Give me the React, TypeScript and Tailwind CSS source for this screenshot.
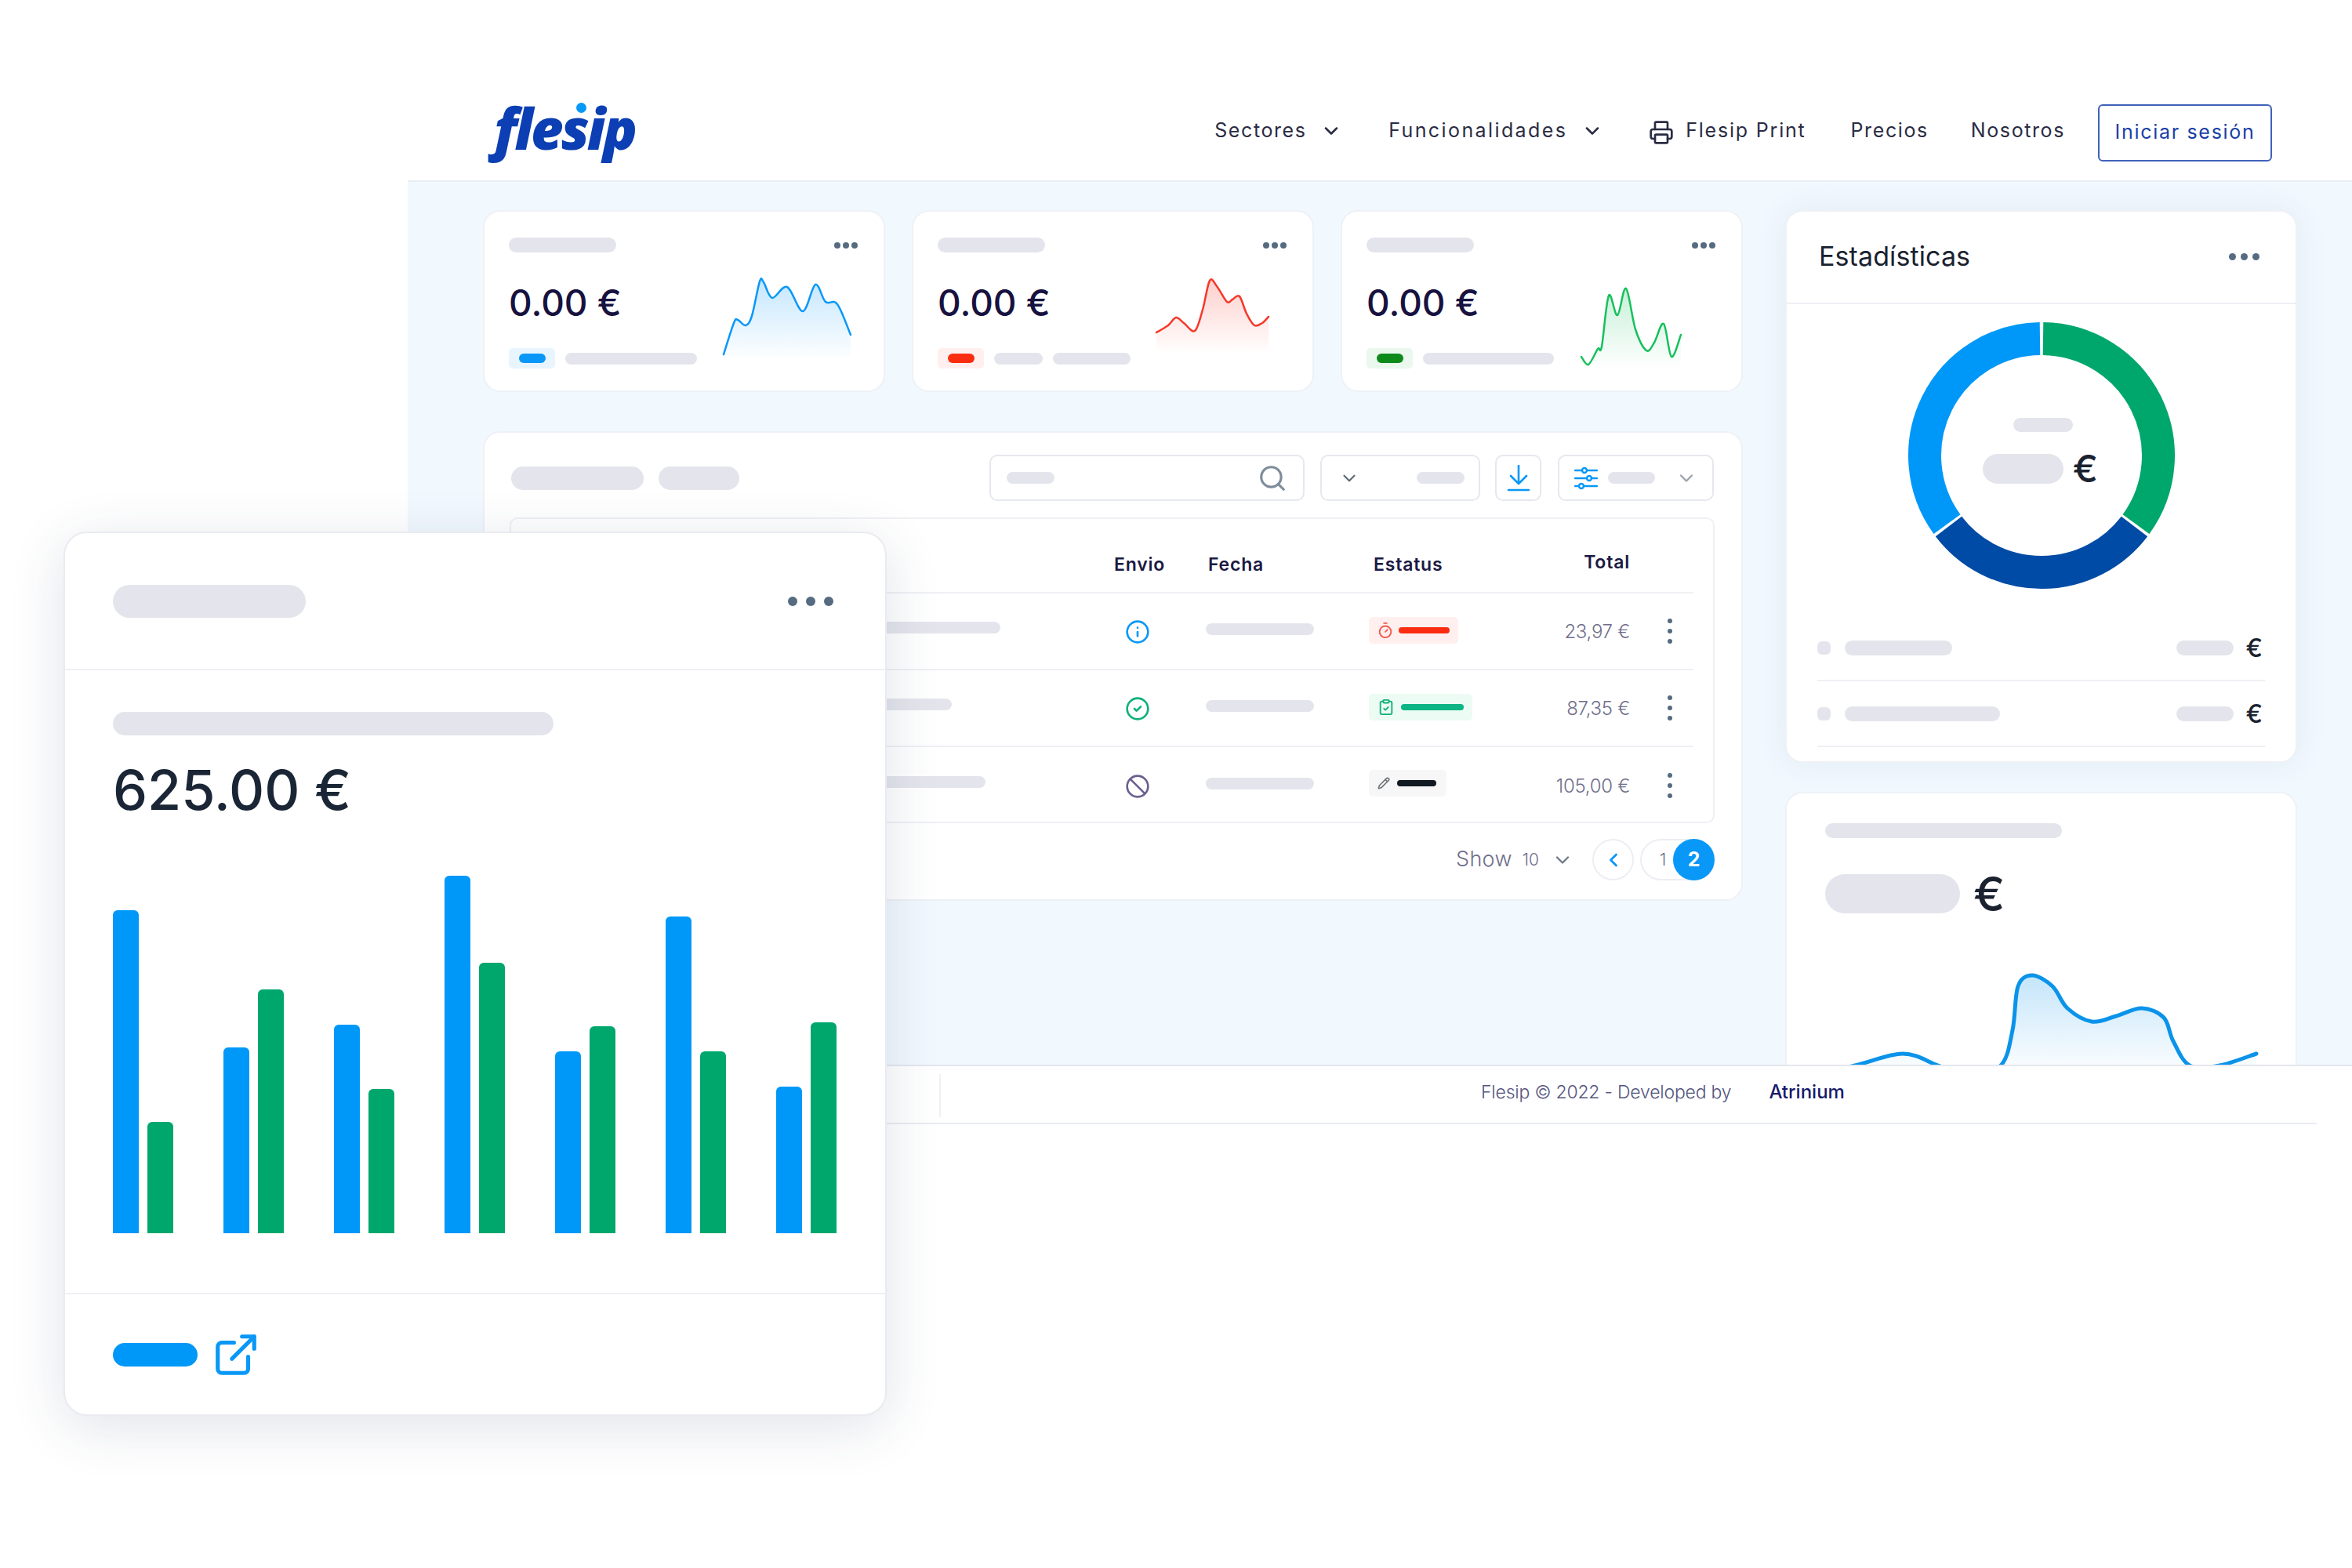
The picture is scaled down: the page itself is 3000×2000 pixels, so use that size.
import { useId } from 'react';
import {
  Ban,
  ChevronDown,
  ChevronLeft,
  CircleCheck,
  ClipboardCheck,
  ExternalLink,
  Info,
  Pencil,
  Printer,
  Search,
  Timer,
} from 'lucide-react';

type Pt = [number, number];

// Skeleton placeholder
function Bar({ className = '' }: { className?: string }) {
  return <div className={`rounded-full bg-[#e4e5ec] ${className}`} />;
}

function Dots({ big = false, mid = false }: { big?: boolean; mid?: boolean }) {
  const dot = big ? 'w-[12px] h-[12px]' : mid ? 'w-[9px] h-[9px]' : 'w-[8px] h-[8px]';
  return (
    <div className={`flex ${big ? 'gap-[11px]' : mid ? 'gap-[6px]' : 'gap-[3px]'}`}>
      <span className={`rounded-full bg-[#566b80] ${dot}`} />
      <span className={`rounded-full bg-[#566b80] ${dot}`} />
      <span className={`rounded-full bg-[#566b80] ${dot}`} />
    </div>
  );
}

function Kebab() {
  return (
    <div className="flex flex-col gap-[7px]">
      <span className="w-[6px] h-[6px] rounded-full bg-[#566b80]" />
      <span className="w-[6px] h-[6px] rounded-full bg-[#566b80]" />
      <span className="w-[6px] h-[6px] rounded-full bg-[#566b80]" />
    </div>
  );
}

// Catmull-Rom to bezier, the charts are smooth curves through read-off points
function smooth(pts: Pt[]) {
  let d = `M${pts[0][0]} ${pts[0][1]}`;
  for (let i = 0; i < pts.length - 1; i++) {
    const p0 = pts[i - 1] ?? pts[i];
    const p1 = pts[i];
    const p2 = pts[i + 1];
    const p3 = pts[i + 2] ?? p2;
    const c1x = p1[0] + (p2[0] - p0[0]) / 6;
    const c1y = p1[1] + (p2[1] - p0[1]) / 6;
    const c2x = p2[0] - (p3[0] - p1[0]) / 6;
    const c2y = p2[1] - (p3[1] - p1[1]) / 6;
    d += ` C${c1x} ${c1y} ${c2x} ${c2y} ${p2[0]} ${p2[1]}`;
  }
  return d;
}

function Spark({
  pts,
  color,
  box,
  width,
  height,
  bottom,
  strokeWidth = 2.5,
}: {
  pts: Pt[];
  color: string;
  box: string;
  width: number;
  height: number;
  bottom: number;
  strokeWidth?: number;
}) {
  const id = useId();
  const line = smooth(pts);
  const first = pts[0];
  const last = pts[pts.length - 1];
  return (
    <svg width={width} height={height} viewBox={box} fill="none">
      <defs>
        <linearGradient id={id} x1="0" y1="0" x2="0" y2="1">
          <stop offset="0" stopColor={color} stopOpacity="0.24" />
          <stop offset="1" stopColor={color} stopOpacity="0" />
        </linearGradient>
      </defs>
      <path d={`${line} L${last[0]} ${bottom} L${first[0]} ${bottom} Z`} fill={`url(#${id})`} />
      <path d={line} stroke={color} strokeWidth={strokeWidth} strokeLinecap="round" strokeLinejoin="round" />
    </svg>
  );
}

function KpiCard({
  badgeBg,
  badgeFg,
  children,
  spark,
  sparkPos,
}: {
  badgeBg: string;
  badgeFg: string;
  children: React.ReactNode;
  spark: React.ReactNode;
  sparkPos: string;
}) {
  return (
    <div className="relative h-[232px] rounded-[22px] border-2 border-[#eef1f6] bg-white pl-[31px] pr-[33px] pt-[33px]">
      <div className="flex items-center justify-between h-[19px]">
        <Bar className="h-[19px] w-[137px]" />
        <Dots />
      </div>
      <div className="mt-[44px] text-[46px] leading-[40px] font-medium text-[#17123f]">0.00 €</div>
      <div className="mt-[38px] flex items-center gap-[13px]">
        <div className={`w-[59px] h-[26px] rounded-[5px] flex items-center justify-center ${badgeBg}`}>
          <span className={`w-[34px] h-[12px] rounded-full ${badgeFg}`} />
        </div>
        {children}
      </div>
      <div className={`absolute ${sparkPos}`}>{spark}</div>
    </div>
  );
}

function Row({
  barW,
  icon,
  status,
  amount,
}: {
  barW: string;
  icon: React.ReactNode;
  status: React.ReactNode;
  amount: string;
}) {
  return (
    <div className="flex items-center h-[98px] border-b-2 border-[#eff0f4] mr-[25px]">
      <div className="w-[769px] pl-[248px]">
        <Bar className={`h-[15px] -translate-y-[5px] ${barW}`} />
      </div>
      <div className="w-[117px] pl-[14px] translate-y-[1px]">{icon}</div>
      <div className="w-[208px]">
        <Bar className="w-[138px] h-[15px] -translate-y-[3px]" />
      </div>
      <div className="w-[210px] -translate-y-[1px]">{status}</div>
      <div className="w-[123px] text-right text-[24px] tracking-[-0.3px] font-light text-[#6f6e8a] translate-y-[1px]">{amount}</div>
      <div className="ml-[48px]">
        <Kebab />
      </div>
    </div>
  );
}

const sliders = (
  <svg width="30" height="30" viewBox="0 0 30 30" fill="none" stroke="#0998f7" strokeWidth="2.4">
    <path d="M1 5h9M16 5h13M1 15h15M22 15h7M1 25h5M12 25h17" strokeLinecap="round" />
    <circle cx="13" cy="5" r="3" />
    <circle cx="19" cy="15" r="3" />
    <circle cx="9" cy="25" r="3" />
  </svg>
);

const bars: [number, number][] = [
  [412, 142],
  [237, 311],
  [266, 184],
  [456, 345],
  [232, 264],
  [404, 232],
  [187, 269],
];

export default function App() {
  return (
    <div
      className="relative w-[3000px] h-[2000px] bg-white overflow-hidden text-[#1a2230]"
      style={{ fontFamily: 'Inter, "Liberation Sans", sans-serif' }}
    >
      <div className="ml-[520px] flex flex-col">
        {/* Header */}
        <header className="h-[232px] pt-[104px] flex items-center justify-between pl-[110px] pr-[102px] border-b-2 border-[#e9eef5]">
          <div
            className="relative text-[72px] leading-none font-extrabold italic tracking-[-3px] text-[#0b3fb3] -translate-y-[4px]"
            style={{ fontFamily: '"Open Sans", sans-serif' }}
          >
            flesip
            <span className="absolute left-[105px] top-[4px] w-[13px] h-[13px] rounded-full bg-[#0998f7]" />
          </div>
          <nav className="flex items-center text-[25px] tracking-[1.6px] text-[#2a2c44]">
            <span className="w-[135px]">Sectores</span>
            <ChevronDown size={28} strokeWidth={2.2} />
            <span className="ml-[59px] w-[246px] tracking-[2.4px]">Funcionalidades</span>
            <ChevronDown size={28} strokeWidth={2.2} />
            <Printer size={32} strokeWidth={2} className="ml-[58px] translate-y-[2px]" />
            <span className="ml-[15px] tracking-[1.8px]">Flesip Print</span>
            <span className="ml-[57px]">Precios</span>
            <span className="ml-[54px]">Nosotros</span>
            <button className="ml-[42px] w-[222px] h-[73px] translate-y-[2px] rounded-[6px] border-2 border-[#3f63b8] text-[#1a3fa8] tracking-[1.7px]">
              Iniciar sesión
            </button>
          </nav>
        </header>

        {/* Dashboard */}
        <main className="h-[1126px] overflow-hidden bg-[#f1f8fe] pt-[36px] pl-[96px] flex gap-[54px]">
          <div className="w-[1607px] flex flex-col">
            <div className="grid grid-cols-3 gap-[34px]">
              <KpiCard
                badgeBg="bg-[#e8f5fe]"
                badgeFg="bg-[#0998f7]"
                sparkPos="left-[302px] top-[80px]"
                spark={
                  <Spark
                    width={170}
                    height={110}
                    box="920 350 170 110"
                    bottom={460}
                    color="#0998f7"
                    pts={[[923, 452], [936, 412], [941, 408], [951, 415], [959, 403], [969, 359], [974, 360], [985, 380], [1004, 366], [1024, 397], [1040, 363], [1053, 385], [1068, 388], [1085, 427]]}
                  />
                }
              >
                <Bar className="w-[168px] h-[15px]" />
              </KpiCard>
              <KpiCard
                badgeBg="bg-[#fff0ef]"
                badgeFg="bg-[#fa2d10]"
                sparkPos="left-[307px] top-[80px]"
                spark={
                  <Spark
                    width={150}
                    height={110}
                    box="1472 350 150 110"
                    bottom={452}
                    color="#f5392b"
                    pts={[[1475, 424], [1490, 415], [1500, 405], [1510, 412], [1524, 422], [1534, 395], [1543, 358], [1552, 365], [1565, 385], [1572, 382], [1581, 378], [1590, 400], [1600, 415], [1610, 412], [1618, 404]]}
                  />
                }
              >
                <div className="flex gap-[13px]">
                  <Bar className="w-[62px] h-[15px]" />
                  <Bar className="w-[99px] h-[15px]" />
                </div>
              </KpiCard>
              <KpiCard
                badgeBg="bg-[#eaf8ee]"
                badgeFg="bg-[#0e8a1a]"
                sparkPos="left-[302px] top-[92px]"
                spark={
                  <Spark
                    width={132}
                    height={110}
                    box="2014 362 132 110"
                    bottom={470}
                    color="#16c05c"
                    pts={[[2017, 455], [2026, 465], [2038, 445], [2043, 442], [2052, 377], [2063, 402], [2074, 368], [2086, 420], [2100, 447], [2110, 437], [2122, 413], [2132, 455], [2144, 427]]}
                  />
                }
              >
                <Bar className="w-[167px] h-[15px]" />
              </KpiCard>
            </div>

            {/* Table card */}
            <section className="mt-[50px] h-[599px] w-[1607px] rounded-[22px] border-2 border-[#eef1f6] bg-white">
              <div className="flex items-center h-[59px] mt-[28px] pl-[34px] pr-[32px]">
                <Bar className="w-[169px] h-[30px]" />
                <Bar className="ml-[19px] w-[103px] h-[30px]" />
                <div className="ml-[319px] w-[402px] h-[59px] rounded-[10px] border-2 border-[#e6e8ef] flex items-center justify-between pl-[20px] pr-[20px]">
                  <Bar className="w-[61px] h-[15px]" />
                  <Search size={38} strokeWidth={2} className="text-[#7f8c9a]" />
                </div>
                <div className="ml-[20px] w-[204px] h-[59px] rounded-[10px] border-2 border-[#e6e8ef] flex items-center justify-between pl-[22px] pr-[18px]">
                  <ChevronDown size={26} strokeWidth={2} className="text-[#5c6b7a]" />
                  <Bar className="w-[61px] h-[15px]" />
                </div>
                <div className="ml-[19px] w-[59px] h-[59px] rounded-[10px] border-2 border-[#e6e8ef] flex items-center justify-center">
                  <svg width="30" height="34" viewBox="0 0 30 34" fill="none" stroke="#0998f7" strokeWidth="2.6" strokeLinecap="round" strokeLinejoin="round">
                    <path d="M15 1v23M5 14l10 10 10-10M2 32h26" />
                  </svg>
                </div>
                <div className="ml-[21px] w-[199px] h-[59px] rounded-[10px] border-2 border-[#e6e8ef] flex items-center pl-[19px]">
                  {sliders}
                  <Bar className="ml-[13px] w-[60px] h-[15px]" />
                  <ChevronDown size={28} strokeWidth={2} className="ml-[26px] text-[#9aa3ad]" />
                </div>
              </div>

              <div className="mt-[21px] ml-[32px] w-[1537px] h-[390px] rounded-[10px] border-2 border-[#eff0f4]">
                <div className="flex items-center h-[95px] pt-[24px] mr-[25px] border-b-2 border-[#eff0f4] text-[23px] tracking-[0.8px] font-semibold text-[#1b1a43]">
                  <div className="w-[769px]" />
                  <div className="w-[120px]">Envio</div>
                  <div className="w-[211px]">Fecha</div>
                  <div className="w-[204px]">Estatus</div>
                  <div className="w-[123px] text-right -translate-y-[3px]">Total</div>
                </div>
                <Row
                  barW="w-[376px]"
                  icon={<Info size={32} strokeWidth={2} className="text-[#0998f7]" />}
                  amount="23,97 €"
                  status={
                    <div className="w-[114px] h-[34px] rounded-[5px] bg-[#fff0ef] flex items-center pl-[10px] gap-[6px]">
                      <Timer size={22} strokeWidth={2} className="text-[#f5574b]" />
                      <span className="w-[65px] h-[8px] rounded-full bg-[#fa2d10]" />
                    </div>
                  }
                />
                <Row
                  barW="w-[314px]"
                  icon={<CircleCheck size={32} strokeWidth={2} className="text-[#10b07a]" />}
                  amount="87,35 €"
                  status={
                    <div className="w-[132px] h-[34px] rounded-[5px] bg-[#ecfbf3] flex items-center pl-[11px] gap-[8px]">
                      <ClipboardCheck size={22} strokeWidth={2} className="text-[#10b07a]" />
                      <span className="w-[80px] h-[8px] rounded-full bg-[#0cb583]" />
                    </div>
                  }
                />
                <div className="[&>div]:border-b-0">
                  <Row
                    barW="w-[357px]"
                    icon={<Ban size={32} strokeWidth={2} className="text-[#6b5f8e]" />}
                    amount="105,00 €"
                    status={
                      <div className="w-[99px] h-[34px] rounded-[5px] bg-[#f7f7f8] flex items-center pl-[11px] gap-[9px] -translate-y-[2px]">
                        <Pencil size={16} strokeWidth={2.4} className="text-[#6e7378]" />
                        <span className="w-[50px] h-[8px] rounded-full bg-[#111a22]" />
                      </div>
                    }
                  />
                </div>
              </div>

              <div className="mt-[20px] pr-[34px] flex items-center justify-end">
                <span className="text-[27px] font-light tracking-[0.3px] text-[#6f6e8a]">Show</span>
                <span className="ml-[13px] text-[21px] font-light text-[#6f6e8a]">10</span>
                <ChevronDown size={28} strokeWidth={2} className="ml-[16px] text-[#6f7a88]" />
                <div className="ml-[24px] w-[53px] h-[53px] rounded-full border-2 border-[#eceef3] flex items-center justify-center">
                  <ChevronLeft size={28} strokeWidth={2.4} className="text-[#0998f7]" />
                </div>
                <div className="ml-[8px] w-[95px] h-[53px] rounded-full border-2 border-[#eceef3] flex items-center justify-between">
                  <span className="ml-[23px] text-[21px] font-light text-[#6f6e8a]">1</span>
                  <span className="-mr-[2px] w-[53px] h-[53px] rounded-full bg-[#0998f7] flex items-center justify-center text-[25px] font-bold text-white">2</span>
                </div>
              </div>
            </section>
          </div>

          <div className="w-[653px] flex flex-col">
            {/* Estadísticas */}
            <section className="h-[705px] shrink-0 rounded-[22px] border-2 border-[#eef1f6] bg-white shadow-[0_0_40px_rgba(60,90,130,0.08)]">
              <div className="h-[118px] flex items-center justify-between pl-[41px] pr-[46px] border-b-2 border-[#eff0f4]">
                <span className="text-[34px] leading-none tracking-[0.1px] -translate-y-[1px]">Estadísticas</span>
                <div className="-translate-y-[1px]">
                  <Dots mid />
                </div>
              </div>
              <div className="relative mt-[22px] mx-auto w-[342px] h-[342px]">
                <svg width="342" height="342" viewBox="-171 -171 342 342" fill="none" strokeWidth="42">
                  <path d="M2 -149A149 149 0 0 1 120.5 87.6" stroke="#00a76d" />
                  <path d="M118.5 90.4A149 149 0 0 1 -118.5 90.4" stroke="#004ba5" />
                  <path d="M-120.5 87.6A149 149 0 0 1 -2 -149" stroke="#0098f8" />
                </svg>
                <div className="absolute inset-0 flex flex-col items-center">
                  <Bar className="mt-[123px] w-[76px] h-[18px] translate-x-[2px]" />
                  <div className="mt-[23px] flex items-center gap-[12px] -translate-x-[1px]">
                    <Bar className="w-[103px] h-[38px]" />
                    <span className="text-[48px] leading-none font-medium">€</span>
                  </div>
                </div>
              </div>
              <div className="mt-[51px] mx-[39px]">
                <div className="h-[66px] flex items-center border-b-2 border-[#eff0f4] pb-[17px]">
                  <span className="w-[17px] h-[17px] rounded-[6px] bg-[#e4e5ec]" />
                  <Bar className="ml-[18px] w-[137px] h-[19px]" />
                  <Bar className="ml-auto w-[73px] h-[19px]" />
                  <span className="ml-[15px] mr-[3px] text-[32px] leading-none font-medium">€</span>
                </div>
                <div className="mt-[18px] h-[66px] flex items-center border-b-2 border-[#eff0f4] pb-[17px]">
                  <span className="w-[17px] h-[17px] rounded-[6px] bg-[#e4e5ec]" />
                  <Bar className="ml-[18px] w-[198px] h-[19px]" />
                  <Bar className="ml-auto w-[73px] h-[19px]" />
                  <span className="ml-[15px] mr-[3px] text-[32px] leading-none font-medium">€</span>
                </div>
              </div>
            </section>

            {/* Second panel, cut by the footer */}
            <section className="mt-[37px] h-[400px] shrink-0 rounded-[22px] border-2 border-[#eef1f6] bg-white pl-[49px] pt-[38px]">
              <Bar className="w-[302px] h-[19px]" />
              <div className="mt-[41px] flex items-center gap-[17px]">
                <Bar className="w-[172px] h-[50px]" />
                <span className="text-[60px] leading-none font-medium">€</span>
              </div>
              <div className="mt-[62px] -ml-[49px]">
                <Spark
                  width={650}
                  height={140}
                  box="2279 1231 650 140"
                  bottom={1371}
                  color="#0a93ea"
                  strokeWidth={5}
                  pts={[[2300, 1372], [2366, 1358], [2427, 1343], [2472, 1358], [2510, 1372], [2552, 1358], [2567, 1313], [2574, 1257], [2592, 1243], [2618, 1257], [2637, 1285], [2668, 1302], [2699, 1295], [2732, 1285], [2760, 1297], [2772, 1327], [2793, 1358], [2831, 1358], [2878, 1343]]}
                />
              </div>
            </section>
          </div>
        </main>

        {/* Footer */}
        <footer className="relative z-10 h-[76px] bg-white border-t-2 border-[#e4e7ef] flex items-center">
          <div className="absolute left-0 right-[45px] bottom-0 h-[2px] bg-[#e9ebf1]" />
          <div className="ml-[678px] w-[2px] h-[55px] bg-[#eff0f4]" />
          <span className="ml-[689px] -translate-y-[4px] text-[23px] tracking-[-0.2px] font-light text-[#54557e]">Flesip © 2022 - Developed by</span>
          <span className="ml-[48px] -translate-y-[4px] text-[24px] font-medium text-[#151a6b]">Atrinium</span>
        </footer>
      </div>

      {/* Floating card over the dashboard */}
      <div className="absolute z-20 left-[81px] top-[678px] w-[1050px] h-[1128px] rounded-[30px] border-2 border-[#e9ebf0] bg-white shadow-[0_14px_70px_rgba(40,60,100,0.14)] flex flex-col">
        <div className="h-[175px] shrink-0 flex items-center justify-between pl-[61px] pr-[66px] border-b-2 border-[#eff0f4]">
          <Bar className="w-[246px] h-[42px]" />
          <Dots big />
        </div>
        <div className="flex-1 pl-[61px] pt-[53px]">
          <Bar className="w-[562px] h-[30px]" />
          <div className="mt-[35px] text-[70px] leading-[70px] font-medium text-[#1a2635]">625.00 €</div>
          <div className="mt-[74px] h-[456px] flex items-end gap-[64px]">
            {bars.map(([blue, green], i) => (
              <div key={i} className="flex items-end gap-[11px]">
                <div className="w-[33px] rounded-t-[6px] bg-[#0098f8]" style={{ height: blue }} />
                <div className="w-[33px] rounded-t-[6px] bg-[#00a76d]" style={{ height: green }} />
              </div>
            ))}
          </div>
        </div>
        <div className="h-[155px] shrink-0 border-t-2 border-[#eff0f4] flex items-center pl-[61px] gap-[18px]">
          <div className="w-[108px] h-[30px] rounded-full bg-[#0098f8]" />
          <ExternalLink size={62} strokeWidth={2} className="text-[#0998f7]" />
        </div>
      </div>
    </div>
  );
}
